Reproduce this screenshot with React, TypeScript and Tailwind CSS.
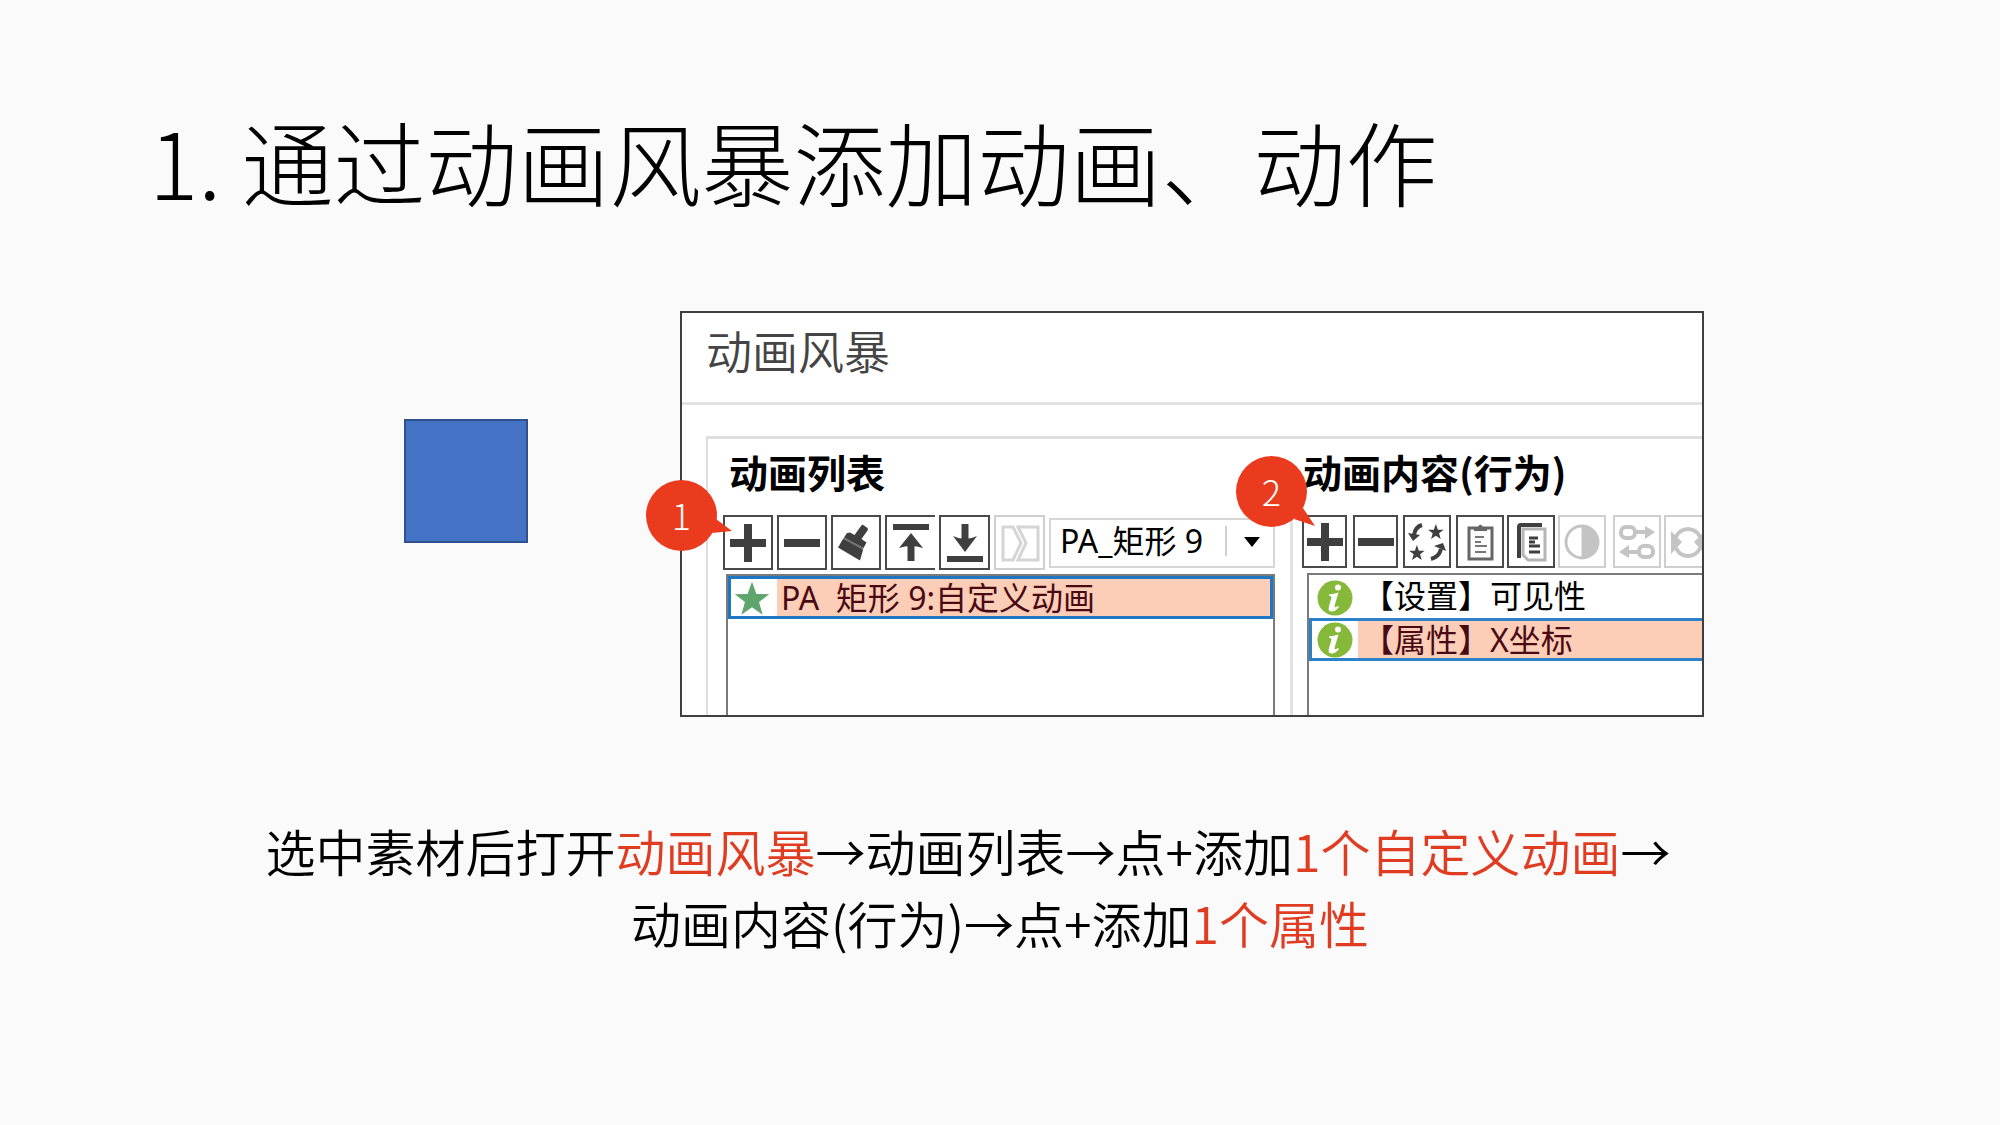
import type { ReactNode } from "react";

const STAR = "12,1.5 14.7,9 22.5,9.2 16.3,14 18.5,21.7 12,17.2 5.5,21.7 7.7,14 1.5,9.2 9.3,9";

function Tool({ label, size, disabled = false, children }: { label: string; size: string; disabled?: boolean; children: ReactNode }) {
  return (
    <button
      type="button"
      aria-label={label}
      disabled={disabled}
      className={`flex shrink-0 items-center justify-center border-2 bg-white ${size} ${
        disabled ? "border-[#cfcfcf] text-[#c4c4c4]" : "border-[#4a4a4a] text-[#3f3f3f]"
      }`}
    >
      {children}
    </button>
  );
}

function Icon({ children }: { children: ReactNode }) {
  return (
    <svg viewBox="0 0 40 40" className="h-10 w-10 shrink-0" fill="none" stroke="currentColor" aria-hidden="true">
      {children}
    </svg>
  );
}

const Plus = () => (
  <Icon>
    <path d="M20 1V39M2 20H38" strokeWidth="8" />
  </Icon>
);
const Minus = () => (
  <Icon>
    <path d="M2 20H38" strokeWidth="8" />
  </Icon>
);

function Brush() {
  return (
    <Icon>
      <g fill="currentColor" stroke="none">
        <path d="M26.5 1.5L31.5 5Q32.500 6 31.500 7.500L25.500 16L30.500 19.500L27.500 25L8 14.500L11 10L14 9.500L18.500 12L25 3Z" />
        <path d="M7 16L27 27L24 37.500L2 24.500Z" />
        <path d="M8 14.500L27.500 25L26.500 28L5.500 19Z" opacity="0.75" />
      </g>
    </Icon>
  );
}

function Info() {
  return (
    <svg viewBox="0 0 36 36" className="h-9 w-9 shrink-0" aria-hidden="true">
      <circle cx="18" cy="18" r="17.500" fill="#86b83a" />
      <circle cx="21" cy="7.500" r="3" fill="#fff" />
      <path d="M12 14.500Q17 14 21.500 12.500L17.500 26Q17 28.500 21 26L22 27Q18 32 14 31.500Q10.500 31 12 26L14.500 17.500Q14.500 16 12 15.800Z" fill="#fff" />
    </svg>
  );
}

function Callout({ value, tail, place }: { value: string; tail: string; place: string }) {
  return (
    <div className={`absolute h-[71px] w-[71px] ${place}`}>
      <svg viewBox="0 0 71 71" className="absolute inset-0 h-full w-full overflow-visible" fill="#eb3b1e" aria-hidden="true">
        <circle cx="35.500" cy="35.500" r="35.500" />
        <polygon points={tail} />
      </svg>
      <span className="relative flex h-full items-center justify-center pb-1 text-[36px] leading-none font-light text-white">{value}</span>
    </div>
  );
}

export default function App() {
  return (
    <main
      lang="zh-CN"
      className="min-h-screen overflow-hidden bg-[#fafafa] pt-[94px] font-['Noto_Sans_CJK_SC',sans-serif] text-black"
    >
      <h1 className="pl-[149px] text-[92px] leading-[132px] font-light">1. 通过动画风暴添加动画、动作</h1>

      <section className="mt-[85px] flex items-start pr-[296px] pl-[404px]">
        <div className="mt-[108px] mr-[152px] h-[124px] w-[124px] shrink-0 border-2 border-[#2f528f] bg-[#4472c4]" />

        <div className="relative min-w-0 flex-1">
          <div className="overflow-hidden border-2 border-[#3f3f3f] bg-white">
            <header className="border-b-3 border-[#e2e2e2] px-6">
              <h2 className="pb-4 text-[46px] leading-[73px] font-[350] text-[#444]">动画风暴</h2>
            </header>

            <div className="mt-[31px] ml-6 flex border-t-3 border-l-2 border-[#dedede]">
              <section className="w-[585px] shrink-0">
                <h3 className="pb-3 pl-[21px] text-[39px] leading-[64px] font-bold">动画列表</h3>
                <div className="border-r-3 border-[#e2e2e2]">
                  <div className="flex h-[55px] pl-[15px]">
                    <Tool label="添加动画" size="h-[55px] w-[50px]"><Plus /></Tool>
                    <div className="w-1" />
                    <Tool label="删除动画" size="h-[55px] w-[50px]"><Minus /></Tool>
                    <div className="w-1" />
                    <Tool label="动画刷" size="h-[55px] w-[50px]"><Brush /></Tool>
                    <div className="w-1" />
                    <Tool label="置顶" size="h-[55px] w-[50px] border-r-0">
                      <Icon>
                        <path d="M2 4H38" strokeWidth="6" />
                        <path d="M20 20V38" strokeWidth="7" />
                        <path d="M20 10L32 25Q26 23 20 23T8 25Z" fill="currentColor" stroke="none" />
                      </Icon>
                    </Tool>
                    <div className="w-1" />
                    <Tool label="置底" size="h-[55px] w-[51px]">
                      <Icon>
                        <path d="M2 36H38" strokeWidth="6" />
                        <path d="M20 1V18" strokeWidth="7" />
                        <path d="M20 29L32 13Q26 16 20 16T8 13Z" fill="currentColor" stroke="none" />
                      </Icon>
                    </Tool>
                    <div className="w-1" />
                    <Tool label="合并" size="h-[55px] w-[51px]" disabled>
                      <Icon>
                        <g strokeWidth="3" opacity="0.7">
                          <path d="M13 4H3V37H13L21 20Z" />
                          <path d="M18 4H38V37H18L26 20Z" />
                        </g>
                      </Icon>
                    </Tool>
                    <div className="w-1" />
                    <div className="relative mt-[3px] h-[50px] w-[226px] shrink-0">
                      <select
                        aria-label="对象"
                        className="h-full w-full appearance-none border-2 border-[#d6d6d6] bg-white pb-1 pl-[9px] font-['Noto_Sans','Noto_Sans_CJK_SC',sans-serif] text-[32px] leading-[42px]"
                      >
                        <option>PA_矩形 9</option>
                      </select>
                      <svg viewBox="0 0 44 30" className="pointer-events-none absolute top-2 right-[7px] h-[30px] w-[44px]" aria-hidden="true">
                        <path d="M2 0V30" stroke="#d0d0d0" strokeWidth="2" />
                        <path d="M20 11H36L28 21Z" fill="#000" />
                      </svg>
                    </div>
                  </div>

                  <ul role="listbox" aria-label="动画列表" className="mt-1 mr-[15px] ml-[18px] h-[141px] border-x-2 border-t-2 border-[#7a7a7a] font-['Noto_Sans','Noto_Sans_CJK_SC',sans-serif]">
                    <li role="option" aria-selected="true" className="flex h-[43px] border-3 border-[#1f76c2] bg-[#fccdb7] text-[32px] leading-[38px] whitespace-pre text-[#4a0a14]">
                      <span className="mr-1 flex w-[46px] shrink-0 items-center justify-center bg-white pr-1">
                        <svg viewBox="1 1 22 21" className="h-9 w-9" fill="#5fa36d" aria-hidden="true">
                          <polygon points={STAR} />
                        </svg>
                      </span>
                      PA  矩形 9:自定义动画
                    </li>
                  </ul>
                </div>
              </section>

              <section className="min-w-0 flex-1">
                <h3 className="pb-3 pl-[10px] text-[39px] leading-[64px] font-bold whitespace-nowrap">动画内容(行为)</h3>
                <div className="flex pl-[9px]">
                  <Tool label="添加行为" size="h-[53px] w-[45px]"><Plus /></Tool>
                  <div className="w-[6px] shrink-0" />
                  <Tool label="删除行为" size="h-[53px] w-[45px]"><Minus /></Tool>
                  <div className="w-[5px] shrink-0" />
                  <Tool label="替换" size="h-[53px] w-[48px]">
                    <Icon>
                      <g fill="currentColor" stroke="none">
                        <polygon points={STAR} transform="translate(20 1) scale(.74)" />
                        <polygon points={STAR} transform="translate(1 22) scale(.74)" />
                        <path d="M1 11L13 13L6 19Z" />
                        <path d="M27 24L36 21L39 29Z" />
                      </g>
                      <path d="M15 3Q8 5 7 13M24 37Q32 35 34 27" strokeWidth="4" />
                    </Icon>
                  </Tool>
                  <div className="w-[5px] shrink-0" />
                  <Tool label="粘贴" size="h-[53px] w-[48px]">
                    <Icon>
                      <path d="M9 6H32V37H9Z" strokeWidth="3" stroke="#666" />
                      <path d="M14 9V5H18Q20 0 23 5H27V9Z" fill="#666" stroke="none" />
                      <path d="M15 15H24M15 20H21M15 24H27M15 30H26" strokeWidth="2" stroke="#777" />
                    </Icon>
                  </Tool>
                  <div className="w-[3px] shrink-0" />
                  <Tool label="复制" size="h-[53px] w-[48px]">
                    <Icon>
                      <path d="M8 36V5Q8 3 10 3H31" strokeWidth="4" />
                      <path d="M12 7H34V38H17L12 33Z" strokeWidth="3" stroke="#b5b5b5" />
                      <path d="M18 16H27M18 20H24M18 24H29M18 30H29" strokeWidth="3" />
                    </Icon>
                  </Tool>
                  <div className="w-[3px] shrink-0" />
                  <Tool label="对比" size="h-[53px] w-[48px]" disabled>
                    <Icon>
                      <circle cx="20" cy="20" r="16" strokeWidth="3" />
                      <path d="M20 4A16 16 0 0 1 20 36Z" fill="currentColor" />
                    </Icon>
                  </Tool>
                  <div className="w-[7px] shrink-0" />
                  <Tool label="交换" size="h-[53px] w-[48px]" disabled>
                    <Icon>
                      <g strokeWidth="4">
                        <rect x="4" y="5" width="14" height="11" rx="5" />
                        <rect x="22" y="24" width="14" height="11" rx="5" />
                        <path d="M18 10H30M22 30H10" />
                      </g>
                      <path d="M28 4L38 10L28 17ZM12 23L2 30L12 36Z" fill="currentColor" stroke="none" />
                    </Icon>
                  </Tool>
                  <div className="w-[3px] shrink-0" />
                  <Tool label="循环" size="h-[53px] w-[48px]" disabled>
                    <Icon>
                      <path d="M8 15A13 13 0 0 1 32 15M8 26A13 13 0 0 0 32 26" strokeWidth="4" />
                      <path d="M3 9L14 20L3 32ZM37 9L26 20L37 32Z" fill="currentColor" stroke="none" />
                    </Icon>
                  </Tool>
                </div>

                <ul role="listbox" aria-label="动画内容" className="mt-[5px] ml-[14px] h-[142px] border-t-2 border-l-2 border-[#7a7a7a] font-['Noto_Sans','Noto_Sans_CJK_SC',sans-serif] text-[32px] leading-[38px] whitespace-nowrap">
                  <li role="option" aria-selected="false" className="flex h-[43px] border-l-3 border-white pt-[2px]">
                    <span className="mr-1 flex w-[46px] shrink-0 items-center justify-center"><Info /></span>
                    【设置】可见性
                  </li>
                  <li role="option" aria-selected="true" className="flex h-[43px] border-y-3 border-l-3 border-[#2b82c9] bg-[#fccdb7] text-[#4a0a14]">
                    <span className="mr-1 flex w-[46px] shrink-0 items-center justify-center bg-white"><Info /></span>
                    【属性】X坐标
                  </li>
                </ul>
              </section>
            </div>
          </div>

          <Callout value="1" place="-left-[34px] top-[169px]" tail="70,39 86,51 66,53" />
          <Callout value="2" place="left-[556px] top-[145px]" tail="67,52 79,70 58,63" />
        </div>
      </section>

      <p className="mt-[97px] text-center text-[50px] leading-[72px] font-[350]">
        选中素材后打开<span className="text-[#e03c22]">动画风暴</span>→动画列表→点+添加
        <span className="text-[#e03c22]">1个自定义动画</span>
        <span className="mr-16">→</span>
        <br />
        动画内容(行为)→点+添加<span className="text-[#e03c22]">1个属性</span>
      </p>
    </main>
  );
}
